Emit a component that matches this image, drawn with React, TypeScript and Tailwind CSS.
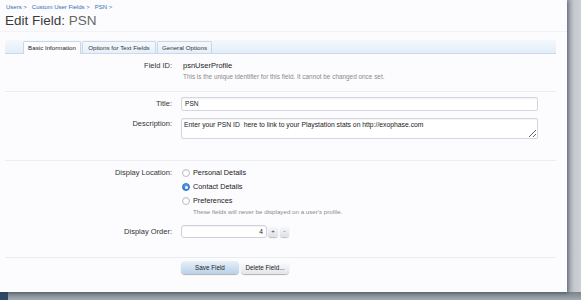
import React from 'react';

const Separator: React.FC<{ className?: string }> = ({ className = '' }) => (
    <div className={`ml-[5px] w-[551px] h-px bg-[#e9edf2] ${className}`} />
);

const Radio: React.FC<{ checked?: boolean; label: string }> = ({ checked, label }) => (
    <div className="flex items-center h-[14px]">
        {checked ? (
            <span className="w-[8px] h-[8px] rounded-full bg-gradient-to-b from-[#5aa2f0] to-[#2f7fe0] border border-[#2a6fc4] flex items-center justify-center">
                <span className="w-[3px] h-[3px] rounded-full bg-white" />
            </span>
        ) : (
            <span className="w-[8px] h-[8px] rounded-full bg-white border border-[#b9bec6] shadow-[inset_0_1px_1px_rgba(0,0,0,0.08)]" />
        )}
        <span className="ml-[3px] text-[7.3px] text-[#222]">{label}</span>
    </div>
);

const App: React.FC = () => {
    return (
        <div className="w-[581px] h-[300px] flex flex-col overflow-hidden bg-[#c7ccd2] font-['Liberation_Sans',Arial,sans-serif]">
            <div className="flex h-[292px]">
                <div className="w-[567px] bg-[#fcfcfe] shadow-[1px_1px_4px_rgba(40,50,60,0.55)] flex flex-col relative z-10">
                    {/* header */}
                    <div className="pt-[3px] pl-[6px] leading-[8px] text-[6px] text-[#2f6db3] flex gap-[5px]">
                        <span>Users &gt;</span>
                        <span>Custom User Fields &gt;</span>
                        <span>PSN &gt;</span>
                    </div>
                    <h1 className="mt-[2px] pl-[5px] text-[13.5px] leading-[16px] text-[#3a3a3a]">
                        Edit Field: <span className="text-[#666]">PSN</span>
                    </h1>
                    <div className="mt-[2px] h-px bg-[#f1f3f6]" />

                    {/* tabs */}
                    <div className="mt-[8px] ml-[5px] w-[551px] h-[14px] bg-gradient-to-b from-[#f4f8fc] to-[#e2edf8] border-b border-[#cbdaea] rounded-tl-[3px] flex items-end pl-[18px] gap-[1px]">
                        <div className="w-[58px] h-[13px] -mb-px bg-[#fcfcfe] border border-b-0 border-[#c9d8e8] rounded-t-[2px] flex items-center justify-center text-[6.2px] text-[#222]">
                            Basic Information
                        </div>
                        <div className="w-[74px] h-[12px] bg-gradient-to-b from-[#f5f9fd] to-[#e6eff9] border border-b-0 border-[#c9d8e8] rounded-t-[2px] flex items-center justify-center text-[6.2px] text-[#333]">
                            Options for Text Fields
                        </div>
                        <div className="w-[55px] h-[12px] bg-gradient-to-b from-[#f5f9fd] to-[#e6eff9] border border-b-0 border-[#c9d8e8] rounded-t-[2px] flex items-center justify-center text-[6.2px] text-[#333]">
                            General Options
                        </div>
                    </div>

                    {/* Field ID */}
                    <div className="mt-[7px] flex leading-[9px]">
                        <div className="w-[172px] text-right text-[7.5px] text-[#333]">Field ID:</div>
                        <div className="ml-[11px] text-[7.5px] text-[#222]">psnUserProfile</div>
                    </div>
                    <div className="mt-[3px] ml-[183px] text-[6.4px] leading-[8px] text-[#8a8a8a]">
                        This is the unique identifier for this field. It cannot be changed once set.
                    </div>

                    <Separator className="mt-[10px]" />

                    {/* Title */}
                    <div className="mt-[5px] flex items-center h-[14px]">
                        <div className="w-[172px] text-right text-[7.5px] text-[#333]">Title:</div>
                        <div className="ml-[9px] w-[357px] h-[14px] bg-white border border-[#d3d7de] rounded-[2px] shadow-[inset_0_1px_1px_rgba(0,0,0,0.05)] flex items-center pl-[3px] text-[6.6px] text-[#222]">
                            PSN
                        </div>
                    </div>

                    {/* Description */}
                    <div className="mt-[7px] flex items-start">
                        <div className="w-[172px] text-right text-[7.5px] text-[#333] leading-[12px]">Description:</div>
                        <textarea
                            readOnly
                            value="Enter your PSN ID  here to link to your Playstation stats on http://exophase.com"
                            className="ml-[9px] w-[357px] h-[21px] bg-white border border-[#d3d7de] rounded-[2px] shadow-[inset_0_1px_1px_rgba(0,0,0,0.05)] px-[2px] pt-[2px] text-[6.8px] leading-[8px] text-[#222] outline-none overflow-hidden"
                        />
                    </div>

                    <Separator className="mt-[21px]" />

                    {/* Display Location */}
                    <div className="mt-[5px] flex">
                        <div className="w-[172px] text-right text-[7.5px] text-[#333] leading-[14px]">Display Location:</div>
                        <div className="ml-[10px] flex flex-col">
                            <Radio label="Personal Details" />
                            <Radio checked label="Contact Details" />
                            <Radio label="Preferences" />
                            <div className="ml-[11px] text-[6.2px] leading-[7px] text-[#8a8a8a]">
                                These fields will never be displayed on a user's profile.
                            </div>
                        </div>
                    </div>

                    {/* Display Order */}
                    <div className="mt-[10px] flex items-center h-[13px]">
                        <div className="w-[172px] text-right text-[7.5px] text-[#333]">Display Order:</div>
                        <div className="ml-[9px] w-[86px] h-[13px] bg-white border border-[#cdd1d8] rounded-[3px] shadow-[inset_0_1px_1px_rgba(0,0,0,0.05)] flex items-center justify-end pr-[3px] text-[6.6px] text-[#222]">
                            4
                        </div>
                        <div className="ml-[1px] w-[10px] h-[11px] rounded-[3px] bg-gradient-to-b from-[#fafafa] to-[#dde0e5] shadow-[0_1px_1px_rgba(0,0,0,0.25)] flex items-center justify-center text-[6px] text-[#333]">
                            +
                        </div>
                        <div className="ml-[2px] w-[9px] h-[11px] rounded-[3px] bg-gradient-to-b from-[#fafafa] to-[#dde0e5] shadow-[0_1px_1px_rgba(0,0,0,0.25)] flex items-center justify-center text-[6px] text-[#333]">
                            -
                        </div>
                    </div>

                    <Separator className="mt-[19px]" />

                    {/* Buttons */}
                    <div className="mt-[3px] ml-[181px] flex gap-[2px]">
                        <button className="w-[58px] h-[13px] rounded-[4px] bg-gradient-to-b from-[#e8f1f9] to-[#b7d1e9] shadow-[0_1px_1px_rgba(0,0,0,0.3)] text-[6.3px] text-[#222]">
                            Save Field
                        </button>
                        <button className="w-[48px] h-[13px] rounded-[4px] bg-gradient-to-b from-[#fdfdfd] to-[#e3e5e9] shadow-[0_1px_1px_rgba(0,0,0,0.3)] text-[6.3px] text-[#222]">
                            Delete Field...
                        </button>
                    </div>
                </div>
                <div className="flex-1 bg-gradient-to-r from-[#9aa1a9] via-[#c4c9cf] to-[#cdd1d6]" />
            </div>
            <div className="h-[8px] flex">
                <div className="w-[8px] bg-[#2e4a66]" />
                <div className="flex-1 bg-gradient-to-b from-[#7a848c] to-[#a3abb2]" />
            </div>
        </div>
    );
};

export default App;
